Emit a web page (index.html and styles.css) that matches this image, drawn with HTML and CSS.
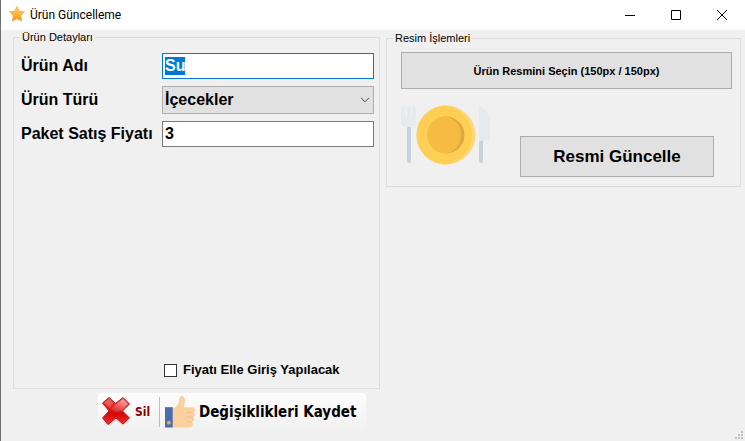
FILE: index.html
```html
<!DOCTYPE html>
<html lang="tr">
<head>
<meta charset="utf-8">
<title>Ürün Güncelleme</title>
<link rel="stylesheet" href="styles.css">
</head>
<body>
<div class="window">
  <header class="titlebar">
    <svg class="app-icon" viewBox="0 0 16 16" aria-hidden="true">
      <defs><linearGradient id="star" x1="0" y1="0" x2="0" y2="1"><stop offset="0" stop-color="#ffd06a"/><stop offset="1" stop-color="#f79a10"/></linearGradient></defs>
      <path d="M8 .4l2.300 4.800 5.300.6-3.900 3.700 1.100 5.700L8 12.700l-4.800 2.500 1.100-5.700L.4 5.800l5.300-.6z" fill="url(#star)" stroke="#e9a54a" stroke-width=".6" stroke-linejoin="round"/>
    </svg>
    <h1 class="title">Ürün Güncelleme</h1>
    <div class="caption-buttons">
      <button type="button" class="caption" aria-label="Simge durumuna küçült"><svg viewBox="0 0 10 10"><path d="M0 5.500h10"/></svg></button>
      <button type="button" class="caption" aria-label="Ekranı kapla"><svg viewBox="0 0 10 10"><path d="M.5.5h9v9h-9z"/></svg></button>
      <button type="button" class="caption" aria-label="Kapat"><svg viewBox="0 0 10 10"><path d="M0 0l10 10M10 0L0 10"/></svg></button>
    </div>
  </header>
  <main class="content">
    <div class="column">
      <fieldset class="group details">
        <legend>Ürün Detayları</legend>
        <div class="fields">
          <label for="name">Ürün Adı</label>
          <input id="name" class="field" type="text" value="Su" autofocus>
          <label for="kind">Ürün Türü</label>
          <div class="select">
            <select id="kind" class="field"><option>İçecekler</option></select>
            <svg class="chevron" viewBox="0 0 10 6" aria-hidden="true"><path d="M1 .8l4 4 4-4"/></svg>
          </div>
          <label for="price">Paket Satış Fiyatı</label>
          <input id="price" class="field" type="text" value="3">
        </div>
        <div class="manual">
          <input id="manual" type="checkbox">
          <label for="manual">Fiyatı Elle Giriş Yapılacak</label>
        </div>
      </fieldset>
      <div class="toolbar">
        <button type="button" class="tool delete">
          <svg class="cross" viewBox="0 0 32 32" aria-hidden="true">
            <defs>
              <linearGradient id="red" x1="0" y1="0" x2="0" y2="1"><stop offset="0" stop-color="#e8504c"/><stop offset=".4" stop-color="#dc1c1c"/><stop offset=".6" stop-color="#d40808"/><stop offset="1" stop-color="#f03030"/></linearGradient>
              <linearGradient id="gloss" x1="0" y1="1" x2="1" y2="0"><stop offset="0" stop-color="#fff" stop-opacity="0"/><stop offset="1" stop-color="#fff" stop-opacity=".6"/></linearGradient>
            </defs>
            <path d="M4 27l6 3 6-5 7 5 6-4-2-2H6z" fill="#dcdcdc"/>
            <path d="M9 1.500l6.500 6L23 1.500l6.500 6.500-7 7 7 7-6.500 6-7-6-8 6.500L2.500 22l6.500-7-6.500-8z" fill="url(#red)" stroke="#b81c1c" stroke-width="1" stroke-linejoin="round"/>
            <path d="M15.500 9L23 3l5 5-6.500 7-6 1-5-3z" fill="url(#gloss)"/>
            <path d="M4 7l5-4 4 4-3 5z" fill="#fff" opacity=".18"/>
          </svg>
          <span>Sil</span>
        </button>
        <button type="button" class="tool save">
          <svg class="thumb" viewBox="0 0 32 34" aria-hidden="true">
            <path d="M8 13.500c4-2 6-5 6.500-8.500.2-3 1-4.500 2.500-4.500 3 0 4 2.500 3.500 6.500L19.500 12H28c4 0 4 5 .8 5.200 3 .8 2.500 4.800-.3 5 2.500 1 1.700 4.700-.8 4.800 2 1.500 1 6-2.200 6H8z" fill="#fbd0a0"/>
            <path d="M22 17.300h7M22 22.300h7M22 27.200h6" fill="none" stroke="#edba87" stroke-width="1"/>
            <path d="M0 12h8v21H0z" fill="#4a6da9"/>
            <circle cx="4" cy="28" r="2" fill="#e3ad58"/>
          </svg>
          <span>Değişiklikleri Kaydet</span>
        </button>
      </div>
    </div>
    <fieldset class="group image">
      <legend>Resim İşlemleri</legend>
      <button type="button" class="button choose">Ürün Resmini Seçin (150px / 150px)</button>
      <div class="image-row">
        <svg class="plate" viewBox="0 0 90 60" role="img" aria-label="Ürün resmi">
          <path d="M6 19h4v37a2 2 0 0 1-4 0z" fill="#cbd1da"/>
          <path d="M0 3a2 2 0 0 1 4 0v9h2V3a2 2 0 0 1 4 0v9h1V3a2 2 0 0 1 4 0v15a4 4 0 0 1-4 4H4a4 4 0 0 1-4-4z" fill="#e6e9ee"/>
          <circle cx="45" cy="30" r="29.500" fill="#ffd975"/>
          <path d="M45 .5a29.500 29.500 0 1 0 0 59c8-2 26-10 26-29.500S53 2 45 .5z" fill="#ffce54"/>
          <circle cx="45" cy="30" r="18.500" fill="#dfa93b"/>
          <path d="M45 11.500a18.500 18.500 0 1 0 0 37c5-1 15-6 15-18.500s-10-17.500-15-18.500z" fill="#f5bb42"/>
          <path d="M78 35h4v21a2 2 0 0 1-4 0z" fill="#cbd1da"/>
          <path d="M78 1c6 1 11 9 11 16v19H78z" fill="#e6e9ee"/>
        </svg>
        <button type="button" class="button update">Resmi Güncelle</button>
      </div>
    </fieldset>
  </main>
  <svg class="grip" viewBox="0 0 8 8" aria-hidden="true"><path d="M6 0h2v2H6zM3 3h2v2H3zM6 3h2v2H6zM0 6h2v2H0zM3 6h2v2H3zM6 6h2v2H6z"/></svg>
</div>
<script src="main.js"></script>
</body>
</html>
```
FILE: styles.css
```css
* {
  box-sizing: border-box;
}

body {
  margin: 0;
  background: #f0f0f0;
  color: #000;
  font-family: "Liberation Sans", Arial, sans-serif;
}

.window {
  position: relative;
  min-height: 100vh;
  border-left: 1px solid #707070;
}

button,
input,
select {
  margin: 0;
  font-family: inherit;
  color: inherit;
}

.titlebar {
  display: flex;
  align-items: center;
  height: 30px;
  padding-left: 8px;
  background: #fff;
}

.app-icon {
  width: 16px;
  height: 16px;
  margin-top: -2px;
}

.title {
  flex: 1;
  margin: 0 0 0 5px;
  font: 12px Roboto, sans-serif;
}

.caption-buttons {
  display: flex;
}

.caption {
  display: flex;
  align-items: center;
  justify-content: center;
  width: 46px;
  height: 29px;
  padding: 0;
  border: 0;
  background: none;
}

.caption svg {
  width: 10px;
  height: 10px;
  fill: none;
  stroke: #000;
}

.content {
  display: grid;
  grid-template-columns: 367fr 355fr;
  align-items: start;
  gap: 6px;
  padding: 0 4px 0 12px;
}

.group {
  min-width: 0;
  margin: 0;
  padding: 0 5px;
  border: 1px solid #dcdcdc;
}

.group legend {
  height: 14px;
  padding: 0 2px;
  font-size: 11px;
  line-height: 14px;
}

.details {
  display: flex;
  flex-direction: column;
  height: 359px;
}

.details legend {
  margin-left: 1px;
}

.fields {
  display: grid;
  grid-template-columns: 143px 1fr;
  align-items: center;
  row-gap: 7px;
  padding-top: 9px;
  font-size: 16px;
  font-weight: bold;
}

.fields label {
  padding-left: 2px;
  white-space: nowrap;
}

.field {
  display: block;
  width: 100%;
  height: 26px;
  padding: 0 2px 1px;
  border: 1px solid #7a7a7a;
  border-radius: 0;
  outline: 0;
  background: #fff;
  font-size: 16px;
  font-weight: bold;
}

.field:focus {
  border-color: #0078d7;
}

.field::selection {
  background: #0078d7;
  color: #fff;
}

.select {
  position: relative;
}

select.field {
  height: 28px;
  appearance: none;
  border-color: #adadad;
  background: #e1e1e1;
}

.chevron {
  position: absolute;
  top: 11px;
  right: 4px;
  width: 10px;
  height: 6px;
  fill: none;
  stroke: #444;
  pointer-events: none;
}

.manual {
  display: flex;
  align-items: center;
  gap: 6px;
  margin: auto 0 10px 145px;
  font-size: 13px;
  font-weight: bold;
  line-height: 16px;
}

.manual input {
  width: 13px;
  height: 13px;
  appearance: none;
  border: 1px solid #333;
  background: #fff;
}

.toolbar {
  display: flex;
  align-items: center;
  width: 268px;
  height: 38px;
  margin: 4px 0 0 85px;
  border-radius: 3px;
  background: linear-gradient(#fdfdfd, #f0f0f0);
}

.tool {
  display: flex;
  align-items: center;
  padding: 0;
  border: 0;
  background: none;
  font-family: "DejaVu Sans Condensed", "DejaVu Sans", sans-serif;
  font-weight: bold;
  white-space: nowrap;
}

.delete {
  gap: 3px;
  width: 62px;
  height: 30px;
  padding-left: 2px;
  border-right: 1px solid #bdbdbd;
  color: #8b0000;
  font-size: 12px;
}

.cross {
  width: 32px;
  height: 32px;
}

.save {
  gap: 3px;
  padding-left: 5px;
  font-size: 15px;
}

.thumb {
  width: 31px;
  height: 34px;
}

.image {
  margin-top: 1px;
  padding: 0 8px 9px 14px;
}

.image legend {
  margin-left: -8px;
}

.button {
  border: 1px solid #adadad;
  border-radius: 0;
  background: #e1e1e1;
  font-weight: bold;
}

.choose {
  display: block;
  width: 100%;
  height: 37px;
  margin-top: 7px;
  font-size: 11px;
}

.image-row {
  display: flex;
  align-items: flex-end;
  justify-content: space-between;
  margin-top: 16px;
  padding-right: 18px;
}

.plate {
  width: 90px;
  height: 60px;
  margin-bottom: 12px;
}

.update {
  width: 194px;
  height: 41px;
  font-size: 17px;
}

.grip {
  position: absolute;
  right: 2px;
  bottom: 2px;
  width: 8px;
  height: 8px;
  fill: #bfbfbf;
}
```
FILE: main.js
```js
const nameField = document.getElementById("name");
nameField.focus();
nameField.select();
```
